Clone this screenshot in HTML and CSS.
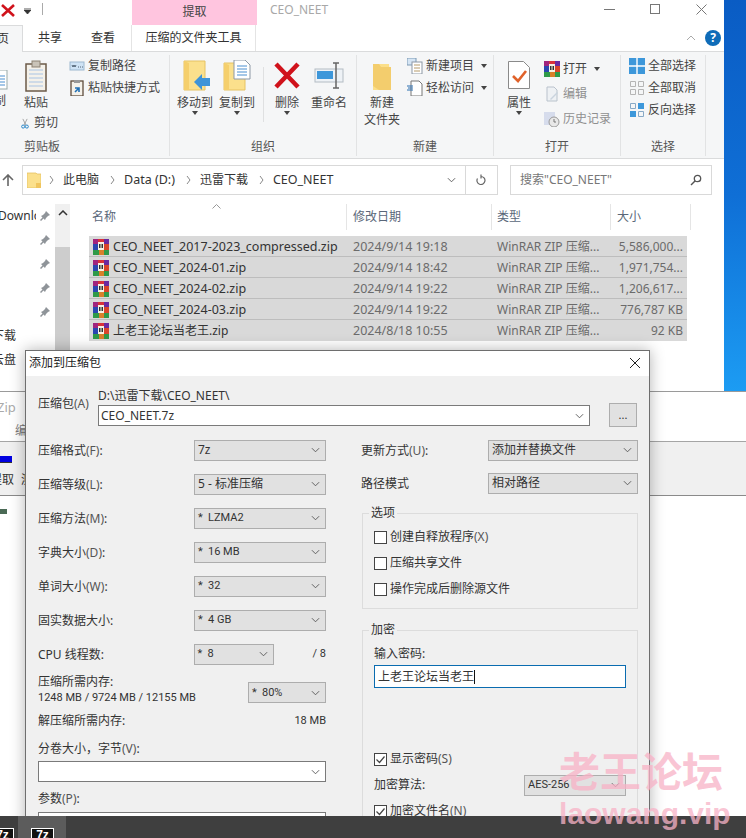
FILE: index.html
```html
<!DOCTYPE html>
<html>
<head>
  <meta charset="utf-8">
  <title>CEO_NEET</title>
  <link rel="stylesheet" href="styles.css">
</head>
<body>
  <svg class="defs" width="0" height="0">
    <symbol id="rar" viewBox="0 0 16 16">
      <rect x="0" y="0" width="16" height="5" fill="#a0247e"/>
      <rect x="5" y="0" width="6" height="5" fill="#d8323a"/>
      <rect x="11" y="0" width="5" height="5" fill="#6a2aa0"/>
      <rect x="0" y="5" width="16" height="6" fill="#2a46b0"/>
      <rect x="11" y="5" width="5" height="6" fill="#d8452a"/>
      <rect x="0" y="11" width="16" height="5" fill="#2f9a48"/>
      <rect x="6" y="11" width="5" height="5" fill="#d9802a"/>
      <rect x="5" y="3" width="6" height="8" fill="#f6f2e4"/>
      <path d="M6.500 5v4M8 5v4M9.500 5v4" stroke="#333" stroke-width="1"/>
    </symbol>
    <symbol id="chev" viewBox="0 0 10 6">
      <path d="M1 1l4 4 4-4" fill="none" stroke="#555" stroke-width="1"/>
    </symbol>
    <symbol id="pin" viewBox="0 0 12 12">
      <path d="M7 1l4 4-2 1-2 2-1 2-1.500-1.500L2 11l-1-1 2.500-2.500L2 6l2-1 2-2z" fill="#8f9499"/>
    </symbol>
    <symbol id="tick" viewBox="0 0 13 13">
      <path d="M2.500 6.500l3 3 5-6" fill="none" stroke="#444" stroke-width="1.200"/>
    </symbol>
  </svg>

  <div class="desktop"></div>

  <!-- window behind the dialog -->
  <div class="backWindow">
    <div class="backTitle"><span class="backZip">Zip</span><span class="backMenu">编</span></div>
    <div class="backTools">
      <div class="backBlue"></div>
      <div class="backLabel"><span>提取</span><span class="backNext">测</span></div>
    </div>
    <div class="backRow"><span class="backIcon"></span></div>
  </div>

  <div class="explorer">
    <div class="titleRow">
      <svg class="titleX" width="14" height="13" viewBox="0 0 14 13"><path d="M1 1l12 11M13 1L1 12" stroke="#d0121b" stroke-width="2.600"/></svg>
      <svg class="titleDrop" width="7" height="6" viewBox="0 0 7 6"><path d="M0 0h7M0 2h7l-3.500 4z" stroke="#333" stroke-width=".8" fill="#333"/></svg>
      <span class="titleSep"></span>
      <div class="contextHead">提取</div>
      <div class="titleText">CEO_NEET</div>
      <div class="winBtns">
        <svg width="11" height="11" viewBox="0 0 11 11"><path d="M0 5.500h11" stroke="#777"/></svg>
        <svg width="11" height="11" viewBox="0 0 11 11"><rect x=".5" y=".5" width="9" height="9" fill="none" stroke="#777"/></svg>
        <svg width="11" height="11" viewBox="0 0 11 11"><path d="M.5.5l10 10M10.500.5l-10 10" stroke="#777"/></svg>
      </div>
    </div>
    <div class="tabRow">
      <div class="tab tabHome"><span>主页</span></div>
      <div class="tab tabShare">共享</div>
      <div class="tab tabView">查看</div>
      <div class="tab tabContext">压缩的文件夹工具</div>
      <svg class="ribbonUp" width="10" height="6" viewBox="0 0 10 6"><path d="M1 5l4-4 4 4" fill="none" stroke="#aaa"/></svg>
      <div class="helpBtn">?</div>
    </div>

    <div class="ribbon">
      <div class="group g1">
        <div class="groupBody">
          <div class="bigCut">
            <svg width="8" height="20" viewBox="0 0 8 20"><rect x="-6" y="0" width="13" height="19" fill="#fff" stroke="#9aa"/><path d="M-3 6h8M-3 9h8M-3 12h8M-3 15h8" stroke="#4a8fd0"/></svg>
            <div class="cutLabel"><span>复制</span></div>
          </div>
          <div class="pasteCol">
            <div class="big">
              <svg class="bigIcon" width="32" height="32" viewBox="0 0 32 32"><rect x="6" y="4" width="20" height="27" fill="#f4f1ea" stroke="#6b5a48" stroke-width="1.500"/><path d="M9 10h14M9 14h14M9 18h14M9 22h14M9 26h14" stroke="#a9c4e4"/><rect x="12" y="1" width="8" height="6" fill="#c9c3b8" stroke="#8b8172"/></svg>
              <div class="bigLabel">粘贴</div>
            </div>
            <div class="small cutRow">
              <svg width="13" height="17" viewBox="0 0 13 17"><path d="M3 1l5 10M10 1L5 11" stroke="#888" stroke-width="1.200"/><circle cx="3.500" cy="13.500" r="2.500" fill="none" stroke="#1d7fc4" stroke-width="1.500"/><circle cx="9.500" cy="13.500" r="2.500" fill="none" stroke="#1d7fc4" stroke-width="1.500"/></svg>
              <span>剪切</span>
            </div>
          </div>
          <div class="smallCol clipCol">
            <div class="small">
              <svg class="smallIcon" width="16" height="16" viewBox="0 0 16 16"><rect x="1" y="4" width="14" height="8" fill="#cfe3f5" stroke="#9db8d0"/><path d="M3 7l1 2 1-2 1 2 1-2M9 9h1M11 9h1M13 9h1" stroke="#345" stroke-width=".8" fill="none"/></svg>
              <span>复制路径</span>
            </div>
            <div class="small">
              <svg class="smallIcon" width="16" height="16" viewBox="0 0 16 16"><rect x="2" y="1" width="12" height="15" fill="#f4f1ea" stroke="#5e4c3c" stroke-width="1.300"/><rect x="5" y="0" width="6" height="3" fill="#999"/><path d="M6 12V8h4M6 8l4 4" stroke="#1f6fb5" stroke-width="1.600" fill="none" transform="rotate(90 8 10)"/></svg>
              <span>粘贴快捷方式</span>
            </div>
          </div>
        </div>
        <div class="groupLabel labelLeft">剪贴板</div>
      </div>

      <div class="group g2">
        <div class="groupBody">
          <div class="big w42">
            <svg class="bigIcon" width="32" height="32" viewBox="0 0 32 32"><path d="M5 1h21v29H5z" fill="#fbe08c" stroke="#e6c263"/><path d="M5 1l5 2v27H5z" fill="#f5cf6c"/><path d="M15 22l8-8v4h8v8h-8v4z" fill="#3f94d8"/></svg>
            <div class="bigLabel">移动到</div>
            <span class="caret"></span>
          </div>
          <div class="big w42">
            <svg class="bigIcon" width="32" height="32" viewBox="0 0 32 32"><path d="M3 3h21v27H3z" fill="#fbe08c" stroke="#e6c263"/><path d="M3 3l5 2v25H3z" fill="#f5cf6c"/><path d="M13 0h11l5 5v14H13z" fill="#fff" stroke="#8d98a5"/><path d="M16 6h10M16 9h10M16 12h10M16 15h10" stroke="#4a8fd0"/></svg>
            <div class="bigLabel">复制到</div>
            <span class="caret"></span>
          </div>
          <span class="groupSep"></span>
          <div class="big w40">
            <svg class="bigIcon" width="32" height="32" viewBox="0 0 32 32"><path d="M5 4l22 23M27 4L5 27" stroke="#d0121b" stroke-width="4.500"/></svg>
            <div class="bigLabel">删除</div>
            <span class="caret"></span>
          </div>
          <div class="big w40 renameBtn">
            <svg class="bigIcon" width="32" height="32" viewBox="0 0 32 32"><rect x="2" y="9" width="28" height="13" fill="#eef2f6" stroke="#b4bcc4"/><rect x="4" y="11" width="16" height="8" fill="#3d97da"/><path d="M20 3h6M23 3v25M20 28h6" stroke="#666" stroke-width="1.500"/></svg>
            <div class="bigLabel">重命名</div>
          </div>
        </div>
        <div class="groupLabel">组织</div>
      </div>

      <div class="group g3">
        <div class="groupBody">
          <div class="big w44">
            <svg class="bigIcon" width="32" height="32" viewBox="0 0 32 32"><path d="M7 4h16l2 26H7z" fill="#fbdf8a"/><path d="M7 4h6l2 3h10l0 23H13L7 26z" fill="#f3cd6d"/></svg>
            <div class="bigLabel">新建<br>文件夹</div>
          </div>
          <div class="smallCol">
            <div class="small">
              <svg class="smallIcon" width="16" height="16" viewBox="0 0 16 16"><rect x="0" y="0" width="9" height="7" fill="#d5e5f4" stroke="#7d99b4"/><rect x="5" y="4" width="10" height="12" fill="#fff" stroke="#8d98a5"/><path d="M7 7h6M7 10h6M7 13h6" stroke="#b59a6a"/></svg>
              <span>新建项目</span><span class="caret caretInline"></span>
            </div>
            <div class="small">
              <svg class="smallIcon" width="16" height="16" viewBox="0 0 16 16"><path d="M4 1h8l3 3v12H4z" fill="#fff" stroke="#777"/><path d="M0 6h6M1 8h5M0 10h6" stroke="#2a6fb0"/></svg>
              <span>轻松访问</span><span class="caret caretInline"></span>
            </div>
          </div>
        </div>
        <div class="groupLabel">新建</div>
      </div>

      <div class="group g4">
        <div class="groupBody">
          <div class="big w40">
            <svg class="bigIcon" width="32" height="32" viewBox="0 0 32 32"><path d="M5.500 1.500h15l6 6v21h-21z" fill="#fff" stroke="#8a8a8a"/><path d="M10 16l5 5 8-10" fill="none" stroke="#e0622a" stroke-width="2.600"/></svg>
            <div class="bigLabel">属性</div>
            <span class="caret"></span>
          </div>
          <div class="smallCol openCol">
            <div class="small">
              <svg class="smallIcon" width="16" height="16"><use href="#rar"/></svg>
              <span>打开</span><span class="caret caretInline"></span>
            </div>
            <div class="small muted">
              <svg class="smallIcon" width="16" height="16" viewBox="0 0 16 16"><path d="M3 1h7l3 3v11H3z" fill="#eef1f4" stroke="#b9c2cc"/><path d="M6 13l7-7 1 1-7 7z" fill="#c9d4de"/></svg>
              <span>编辑</span>
            </div>
            <div class="small muted">
              <svg class="smallIcon" width="16" height="16" viewBox="0 0 16 16"><rect x="0" y="1" width="11" height="13" fill="#d6dcec"/><circle cx="10" cy="11" r="5" fill="#e8e8e8" stroke="#999"/><path d="M10 8v3h2" stroke="#777" fill="none"/></svg>
              <span>历史记录</span>
            </div>
          </div>
        </div>
        <div class="groupLabel">打开</div>
      </div>

      <div class="group g5">
        <div class="groupBody">
          <div class="smallCol">
            <div class="small">
              <svg class="smallIcon" width="16" height="16" viewBox="0 0 16 16"><rect width="16" height="16" fill="#3d97da"/><path d="M8 0v16M0 8h16" stroke="#fff" stroke-width="1.400"/></svg>
              <span>全部选择</span>
            </div>
            <div class="small">
              <svg class="smallIcon" width="16" height="16" viewBox="0 0 16 16"><path d="M1.500 1.500h5v5h-5zM9.500 1.500h5v5h-5zM1.500 9.500h5v5h-5zM9.500 9.500h5v5h-5z" fill="none" stroke="#b5b5b5"/></svg>
              <span>全部取消</span>
            </div>
            <div class="small">
              <svg class="smallIcon" width="16" height="16" viewBox="0 0 16 16"><rect x="9" y="1" width="6" height="6" fill="#3d97da"/><rect x="1" y="9" width="6" height="6" fill="#3d97da"/><path d="M1.500 1.500h5v5h-5zM9.500 9.500h5v5h-5z" fill="none" stroke="#88a9c6"/></svg>
              <span>反向选择</span>
            </div>
          </div>
        </div>
        <div class="groupLabel">选择</div>
      </div>
    </div>

    <div class="addressRow">
      <svg class="upArrow" width="12" height="12" viewBox="0 0 12 12"><path d="M6 12V1M1 6l5-5 5 5" fill="none" stroke="#666" stroke-width="1.600"/></svg>
      <div class="addressBar">
        <svg class="addrFolder" width="14" height="16" viewBox="0 0 14 16"><path d="M0 1h9l1 1h4v14H0z" fill="#fbe08c" stroke="#e6c263" stroke-width=".8"/><rect x="9" y="11" width="5" height="5" fill="#f0c55e"/></svg>
        <svg class="crumbSep" width="5" height="8" viewBox="0 0 5 8"><path d="M1 0l3 4-3 4" fill="none" stroke="#888"/></svg>
        <span class="crumb">此电脑</span>
        <svg class="crumbSep" width="5" height="8" viewBox="0 0 5 8"><path d="M1 0l3 4-3 4" fill="none" stroke="#888"/></svg>
        <span class="crumb crumbLatin">Data (D:)</span>
        <svg class="crumbSep" width="5" height="8" viewBox="0 0 5 8"><path d="M1 0l3 4-3 4" fill="none" stroke="#888"/></svg>
        <span class="crumb">迅雷下载</span>
        <svg class="crumbSep" width="5" height="8" viewBox="0 0 5 8"><path d="M1 0l3 4-3 4" fill="none" stroke="#888"/></svg>
        <span class="crumb crumbLatin">CEO_NEET</span>
        <svg class="addrDrop" width="9" height="6"><use href="#chev"/></svg>
        <div class="addrRefresh">
          <svg width="11" height="12" viewBox="0 0 11 12"><path d="M5 2.500a4 4 0 1 1-3.500 2M5 .5v4" fill="none" stroke="#666" stroke-width="1.200"/></svg>
        </div>
      </div>
      <div class="searchBox">
        <span>搜索"CEO_NEET"</span>
        <svg width="12" height="12" viewBox="0 0 12 12"><circle cx="7.500" cy="4.500" r="3.200" fill="none" stroke="#555" stroke-width="1.300"/><path d="M5 7l-4 4" stroke="#555" stroke-width="1.500"/></svg>
      </div>
    </div>

    <div class="mainArea">
      <div class="navPane">
        <div class="navRow"><span class="navName">Downloads</span><svg width="12" height="12"><use href="#pin"/></svg></div>
        <div class="navRow navPinOnly"><svg width="12" height="12"><use href="#pin"/></svg></div>
        <div class="navRow navPinOnly"><svg width="12" height="12"><use href="#pin"/></svg></div>
        <div class="navRow navPinOnly"><svg width="12" height="12"><use href="#pin"/></svg></div>
        <div class="navRow navPinOnly"><svg width="12" height="12"><use href="#pin"/></svg></div>
        <div class="navRow navClip"><span>下载</span></div>
        <div class="navRow navClip"><span>云盘</span></div>
      </div>
      <div class="navScroll">
        <div class="navScrollUp"><svg width="10" height="6" viewBox="0 0 10 6"><path d="M1 5l4-4 4 4" fill="none" stroke="#333" stroke-width="1.500"/></svg></div>
        <div class="navScrollThumb"></div>
      </div>
      <div class="fileList">
        <div class="listHead">
          <div class="headCell headName">名称
            <svg class="sortMark" width="9" height="5" viewBox="0 0 9 5"><path d="M.5 4.500l4-4 4 4" fill="none" stroke="#999"/></svg>
          </div>
          <div class="headCell headDate">修改日期</div>
          <div class="headCell headType">类型</div>
          <div class="headCell headSize">大小</div>
        </div>
        <div class="rows">
          <div class="fileRow"><svg width="16" height="16"><use href="#rar"/></svg><span class="fName fLatin">CEO_NEET_2017-2023_compressed.zip</span><span class="fDate">2024/9/14 19:18</span><span class="fType">WinRAR ZIP 压缩...</span><span class="fSize">5,586,000...</span></div>
          <div class="fileRow"><svg width="16" height="16"><use href="#rar"/></svg><span class="fName fLatin">CEO_NEET_2024-01.zip</span><span class="fDate">2024/9/14 18:42</span><span class="fType">WinRAR ZIP 压缩...</span><span class="fSize">1,971,754...</span></div>
          <div class="fileRow"><svg width="16" height="16"><use href="#rar"/></svg><span class="fName fLatin">CEO_NEET_2024-02.zip</span><span class="fDate">2024/9/14 19:22</span><span class="fType">WinRAR ZIP 压缩...</span><span class="fSize">1,206,617...</span></div>
          <div class="fileRow"><svg width="16" height="16"><use href="#rar"/></svg><span class="fName fLatin">CEO_NEET_2024-03.zip</span><span class="fDate">2024/9/14 19:22</span><span class="fType">WinRAR ZIP 压缩...</span><span class="fSize">776,787 KB</span></div>
          <div class="fileRow"><svg width="16" height="16"><use href="#rar"/></svg><span class="fName">上老王论坛当老王.zip</span><span class="fDate">2024/8/18 10:55</span><span class="fType">WinRAR ZIP 压缩...</span><span class="fSize">92 KB</span></div>
        </div>
      </div>
    </div>
  </div>

  <div class="dialog">
    <div class="dlgTitle">
      <span>添加到压缩包</span>
      <svg width="12" height="12" viewBox="0 0 12 12"><path d="M1 1l10 10M11 1L1 11" stroke="#222" stroke-width="1"/></svg>
    </div>
    <div class="dlgBody">
      <div class="archiveRow">
        <div class="archiveLabel">压缩包<span class="key">(A)</span></div>
        <div class="archivePath">
          <div class="pathText">D:\迅雷下载\CEO_NEET\</div>
          <div class="combo wideCombo"><span>CEO_NEET.7z</span><svg width="9" height="6"><use href="#chev"/></svg></div>
        </div>
        <div class="browseBtn">...</div>
      </div>

      <div class="columns">
        <div class="colLeft">
          <div class="field"><span>压缩格式<span class="key">(F)</span>:</span><div class="select sel132"><span>7z</span><svg width="9" height="6"><use href="#chev"/></svg></div></div>
          <div class="field"><span>压缩等级<span class="key">(L)</span>:</span><div class="select sel132"><span>5 - 标准压缩</span><svg width="9" height="6"><use href="#chev"/></svg></div></div>
          <div class="field"><span>压缩方法<span class="key">(M)</span>:</span><div class="select sel132"><span class="narrow"><i class="star">*</i>LZMA2</span><svg width="9" height="6"><use href="#chev"/></svg></div></div>
          <div class="field"><span>字典大小<span class="key">(D)</span>:</span><div class="select sel132"><span class="narrow"><i class="star">*</i>16 MB</span><svg width="9" height="6"><use href="#chev"/></svg></div></div>
          <div class="field"><span>单词大小<span class="key">(W)</span>:</span><div class="select sel132"><span class="narrow"><i class="star">*</i>32</span><svg width="9" height="6"><use href="#chev"/></svg></div></div>
          <div class="field"><span>固实数据大小:</span><div class="select sel132"><span class="narrow"><i class="star">*</i>4 GB</span><svg width="9" height="6"><use href="#chev"/></svg></div></div>
          <div class="field fieldCpu">
            <span class="cpuName">CPU 线程数:</span>
            <div class="select sel80"><span class="narrow"><i class="star">*</i>8</span><svg width="9" height="6"><use href="#chev"/></svg></div>
            <span class="cpuMax narrow">/ 8</span>
          </div>
          <div class="memRow">
            <div class="memText">压缩所需内存:<br><span class="narrow">1248 MB / 9724 MB / 12155 MB</span></div>
            <div class="select sel78"><span class="narrow"><i class="star">*</i>80%</span><svg width="9" height="6"><use href="#chev"/></svg></div>
          </div>
          <div class="unpackRow"><span>解压缩所需内存:</span><span class="narrow">18 MB</span></div>
          <div class="splitLabel">分卷大小，字节<span class="key">(V)</span>:</div>
          <div class="combo"><span></span><svg width="9" height="6"><use href="#chev"/></svg></div>
          <div class="paramLabel">参数<span class="key">(P)</span>:</div>
          <div class="combo paramInput"></div>
        </div>

        <div class="colRight">
          <div class="field"><span>更新方式<span class="key">(U)</span>:</span><div class="select sel150"><span>添加并替换文件</span><svg width="9" height="6"><use href="#chev"/></svg></div></div>
          <div class="field fieldPath"><span>路径模式</span><div class="select sel150"><span>相对路径</span><svg width="9" height="6"><use href="#chev"/></svg></div></div>

          <fieldset class="optBox">
            <legend>选项</legend>
            <div class="check"><span class="box"></span><span>创建自释放程序<span class="key">(X)</span></span></div>
            <div class="check"><span class="box"></span><span>压缩共享文件</span></div>
            <div class="check"><span class="box"></span><span>操作完成后删除源文件</span></div>
          </fieldset>

          <fieldset class="encBox">
            <legend>加密</legend>
            <div class="pwLabel">输入密码:</div>
            <div class="pwInput">上老王论坛当老王<span class="textCaret"></span></div>
            <div class="check showPw"><span class="box"><svg width="13" height="13"><use href="#tick"/></svg></span><span>显示密码<span class="key">(S)</span></span></div>
            <div class="algoRow"><span>加密算法:</span><div class="select sel102"><span class="narrow">AES-256</span><svg width="9" height="6"><use href="#chev"/></svg></div></div>
            <div class="check"><span class="box"><svg width="13" height="13"><use href="#tick"/></svg></span><span>加密文件名<span class="key">(N)</span></span></div>
          </fieldset>
        </div>
      </div>
    </div>
  </div>

  <div class="taskbar">
    <div class="taskItem taskCut"><span class="sevenZ">7z</span></div>
    <div class="taskItem taskActive"><span class="sevenZ">7z</span></div>
  </div>

  <div class="watermark">
    <div class="wmCn">老王论坛</div>
    <div class="wmEn">laowang.vip</div>
  </div>
</body>
</html>
```

FILE: styles.css
```css
* {
  box-sizing: border-box;
}
html, body {
  margin: 0;
  padding: 0;
}
body {
  position: relative;
  width: 746px;
  height: 838px;
  overflow: hidden;
  background-color: #fff;
  color: #333;
  font-family: "Noto Sans", "Noto Sans CJK SC", sans-serif;
  font-size: 12px;
  line-height: 16px;
}
.defs {
  position: absolute;
}

/* desktop and the window behind */
.desktop {
  position: absolute;
  left: 724px;
  top: 0;
  width: 22px;
  height: 392px;
  background: linear-gradient(#0a5cc4, #0f6fd6 50%, #1c9cf3);
}
.backWindow {
  position: absolute;
  left: 0;
  top: 391px;
  width: 746px;
  height: 425px;
  background-color: #fff;
  border-top: 1px solid #9a9a9a;
}
.backTitle {
  height: 50px;
  border-bottom: 1px solid #a5a5a5;
  color: #aaa;
}
.backZip {
  display: block;
  padding-top: 7px;
  height: 31px;
  font-size: 13px;
  margin-left: -3px;
}
.backMenu {
  display: block;
  margin-left: 15px;
  color: #777;
}
.backTools {
  height: 54px;
  padding-top: 14px;
  background-color: #f0f0f0;
  border-bottom: 1px solid #8a8a8a;
}
.backBlue {
  width: 12px;
  height: 7px;
  background-color: #0000e0;
  border-bottom: 1px solid #333;
}
.backLabel {
  display: flex;
  margin: 9px 0 0 -10px;
  color: #333;
}
.backNext {
  margin-left: 7px;
}
.backRow {
  padding-top: 13px;
}
.backIcon {
  display: block;
  width: 7px;
  height: 5px;
  background-color: #4a6a55;
}

/* explorer window */
.explorer {
  position: absolute;
  left: 0;
  top: 0;
  width: 724px;
  height: 391px;
  background-color: #fff;
  overflow: hidden;
}
.titleRow {
  display: flex;
  align-items: center;
  height: 25px;
}
.titleX {
  margin-left: 1px;
  margin-top: -4px;
}
.titleDrop {
  margin-left: 9px;
  margin-top: -3px;
}
.titleSep {
  width: 1px;
  height: 12px;
  margin-left: 11px;
  margin-top: -7px;
  background-color: #aaa;
}
.contextHead {
  width: 125px;
  height: 25px;
  margin-left: 89px;
  background-color: #ffc5df;
  text-align: center;
  line-height: 24px;
  color: #444;
}
.titleText {
  margin-left: 13px;
  margin-top: -5px;
  color: #a8a8a8;
}
.winBtns {
  display: flex;
  gap: 35px;
  margin-left: auto;
  margin-right: 17px;
  margin-top: -6px;
}
.tabRow {
  display: flex;
  align-items: center;
  height: 27px;
  border-bottom: 1px solid #dadbdc;
}
.tab {
  height: 26px;
  line-height: 25px;
  color: #333;
}
.tabHome {
  display: flex;
  justify-content: flex-end;
  width: 23px;
  height: 27px;
  overflow: hidden;
  background-color: #f5f6f7;
  border-right: 1px solid #dadbdc;
  border-top: 1px solid #dadbdc;
  padding-right: 13px;
  flex-shrink: 0;
}
.tabHome span {
  flex-shrink: 0;
}
.tabShare {
  margin-left: 15px;
}
.tabView {
  margin-left: 29px;
}
.tabContext {
  width: 125px;
  margin-left: 16px;
  text-align: center;
  border-left: 1px solid #e4e4e4;
  border-right: 1px solid #e4e4e4;
}
.ribbonUp {
  margin-left: 430px;
}
.helpBtn {
  width: 16px;
  height: 16px;
  margin-left: 9px;
  border-radius: 50%;
  background-color: #0f6cb8;
  color: #fff;
  text-align: center;
  font-weight: bold;
  font-size: 12px;
  line-height: 16px;
}

/* ribbon */
.ribbon {
  display: flex;
  height: 107px;
  padding-top: 3px;
  background-color: #f5f6f7;
  border-bottom: 1px solid #dadbdc;
}
.group {
  display: flex;
  flex-direction: column;
  height: 101px;
  border-right: 1px solid #e2e3e4;
}
.g1 { width: 170px; }
.g2 { width: 187px; padding-left: 4px; }
.g3 { width: 137px; padding-left: 3px; }
.g4 { width: 127px; padding-left: 5px; }
.g5 { width: 85px; padding-left: 8px; }
.groupBody {
  display: flex;
  height: 84px;
}
.groupLabel {
  height: 16px;
  text-align: center;
  color: #555;
}
.g2 .groupLabel { margin-left: -4px; }
.g3 .groupLabel { margin-left: -3px; }
.g4 .groupLabel { margin-left: -5px; }
.g5 .groupLabel { margin-left: -8px; }
.labelLeft {
  text-align: left;
  padding-left: 24px;
}
.groupSep {
  width: 1px;
  height: 55px;
  margin: 12px 3px 0 5px;
  background-color: #dfe0e1;
}
.big {
  display: flex;
  flex-direction: column;
  align-items: center;
  padding-top: 5px;
  flex-shrink: 0;
}
.w42 { width: 42px; }
.w40 { width: 40px; }
.w44 { width: 44px; }
.renameBtn { margin-left: 2px; }
.bigIcon {
  display: block;
  margin-bottom: 2px;
}
.bigLabel {
  text-align: center;
  line-height: 17px;
  color: #444;
}
.caret {
  display: block;
  width: 0;
  height: 0;
  border-left: 3.5px solid transparent;
  border-right: 3.5px solid transparent;
  border-top: 4px solid #444;
}
.caretInline {
  margin-left: 7px;
}
.bigCut {
  width: 8px;
  padding-top: 15px;
  overflow: hidden;
  flex-shrink: 0;
}
.bigCut svg {
  display: block;
}
.cutLabel {
  display: flex;
  justify-content: flex-end;
  width: 6px;
  margin-top: 3px;
  overflow: hidden;
  color: #444;
}
.cutLabel span {
  flex-shrink: 0;
}
.pasteCol {
  width: 44px;
  margin-left: 6px;
  flex-shrink: 0;
}
.cutRow {
  margin-left: 7px;
  margin-top: 1px;
  gap: 5px;
  white-space: nowrap;
}
.smallCol {
  display: flex;
  flex-direction: column;
  margin-left: 3px;
}
.g5 .smallCol {
  margin-left: 0;
}
.clipCol {
  margin-left: 11px;
}
.openCol {
  margin-left: 5px;
  padding-top: 3px;
  gap: 3px;
}
.small {
  display: flex;
  align-items: center;
  height: 22px;
  color: #444;
  white-space: nowrap;
}
.smallIcon {
  margin-right: 3px;
  flex-shrink: 0;
}
.muted {
  color: #8f8f8f;
}

/* address bar */
.addressRow {
  display: flex;
  height: 45px;
  padding: 6px 0 9px;
}
.upArrow {
  margin: 9px 8px 0 2px;
}
.addressBar {
  display: flex;
  align-items: center;
  width: 476px;
  height: 30px;
  padding-left: 4px;
  border: 1px solid #d9d9d9;
}
.addrFolder {
  margin-right: 8px;
}
.crumbSep {
  flex-shrink: 0;
}
.crumb {
  margin: 0 11px 0 9px;
  white-space: nowrap;
}
.crumbLatin {
  font-size: 12.5px;
}
.addrDrop {
  margin-left: auto;
  margin-right: 9px;
}
.addrRefresh {
  display: flex;
  align-items: center;
  justify-content: center;
  width: 32px;
  height: 28px;
  border-left: 1px solid #d9d9d9;
}
.searchBox {
  display: flex;
  align-items: center;
  justify-content: space-between;
  width: 202px;
  height: 30px;
  margin-left: 12px;
  padding: 0 9px;
  border: 1px solid #d9d9d9;
  color: #777;
}

/* navigation pane and file list */
.mainArea {
  display: flex;
  height: 187px;
}
.navPane {
  width: 55px;
  overflow: hidden;
  flex-shrink: 0;
}
.navRow {
  display: flex;
  align-items: center;
  height: 24px;
  white-space: nowrap;
}
.navName {
  width: 38px;
  margin-left: -2px;
  overflow: hidden;
  margin-right: 3px;
}
.navRow svg {
  flex-shrink: 0;
}
.navPinOnly {
  padding-left: 39px;
}
.navClip {
  justify-content: flex-end;
  width: 16px;
  overflow: hidden;
}
.navClip span {
  flex-shrink: 0;
}
.navScroll {
  width: 15px;
  background-color: #f0f0f0;
  flex-shrink: 0;
}
.navScrollUp {
  display: flex;
  justify-content: center;
  align-items: center;
  height: 17px;
}
.navScrollThumb {
  height: 170px;
  margin-top: 26px;
  background-color: #cdcdcd;
}
.fileList {
  flex: 1;
}
.listHead {
  display: flex;
  height: 26px;
}
.headCell {
  height: 26px;
  line-height: 25px;
  color: #5a6779;
  border-right: 1px solid #e5e5e5;
}
.headName {
  position: relative;
  width: 277px;
  padding-left: 22px;
}
.sortMark {
  position: absolute;
  left: 142px;
  top: 0;
}
.headDate {
  width: 145px;
  padding-left: 6px;
}
.headType {
  width: 119px;
  padding-left: 5px;
}
.headSize {
  width: 80px;
  padding-left: 6px;
}
.rows {
  width: 598px;
  margin: 6px 0 0 19px;
}
.fileRow {
  display: flex;
  align-items: center;
  height: 21px;
  padding: 1px 0 0 4px;
  background-color: #d9d9d9;
  border-bottom: 1px solid #bdbdbd;
  white-space: nowrap;
  color: #6b6b6b;
}
.fileRow:last-child {
  padding-top: 0;
  border-bottom: 0;
}
.fName {
  width: 240px;
  margin-left: 4px;
  color: #333;
}
.fLatin {
  font-size: 12.5px;
}
.fDate {
  width: 144px;
  font-size: 12.5px;
}
.fType {
  width: 120px;
}
.fSize {
  width: 66px;
  text-align: right;
}

/* the add-to-archive dialog */
.dialog {
  position: absolute;
  left: 25px;
  top: 350px;
  width: 625px;
  height: 488px;
  background-color: #f0f0f0;
  border: 1px solid #6e6e6e;
  box-shadow: 0 0 14px rgba(0, 0, 0, .3);
  overflow: hidden;
}
.dlgTitle {
  display: flex;
  align-items: center;
  justify-content: space-between;
  height: 25px;
  padding: 0 8px 2px 3px;
  background-color: #fff;
  color: #222;
}
.dlgBody {
  padding: 0 12px;
}
.key {
  color: #555;
}
.narrow {
  font-family: Roboto, "Noto Sans CJK SC", sans-serif;
  font-size: 11px;
}
.archiveRow {
  display: flex;
  height: 57px;
}
.archiveLabel {
  width: 60px;
  margin-top: 20px;
}
.archivePath {
  width: 492px;
  padding-top: 13px;
}
.pathText {
  height: 16px;
  line-height: 14px;
}
.combo {
  display: flex;
  align-items: center;
  justify-content: space-between;
  height: 21px;
  padding: 0 5px 0 2px;
  background-color: #fff;
  border: 1px solid #7a7a7a;
}
.browseBtn {
  width: 28px;
  height: 24px;
  margin: 27px 0 0 19px;
  background-color: #e1e1e1;
  border: 1px solid #adadad;
  text-align: center;
  line-height: 21px;
  font-size: 11px;
}
.columns {
  display: flex;
  gap: 35px;
}
.colLeft {
  width: 288px;
  flex-shrink: 0;
}
.colRight {
  width: 277px;
  flex-shrink: 0;
}
.field {
  display: flex;
  align-items: center;
  justify-content: space-between;
  height: 34px;
}
.field > span:first-child {
  margin-top: 2px;
}
.fieldPath {
  height: 32px;
}
.fieldCpu {
  justify-content: flex-start;
}
.cpuName {
  width: 156px;
}
.cpuMax {
  flex-shrink: 0;
  margin-left: 39px;
  white-space: nowrap;
}
.select {
  display: flex;
  align-items: center;
  justify-content: space-between;
  height: 21px;
  padding: 0 5px 0 3px;
  background-color: #e1e1e1;
  border: 1px solid #adadad;
  flex-shrink: 0;
  white-space: nowrap;
}
.sel132 { width: 132px; }
.sel80 { width: 80px; }
.sel78 { width: 78px; }
.sel150 { width: 150px; }
.sel102 { width: 102px; }
.star {
  display: inline-block;
  width: 10px;
  font-style: normal;
}
.memRow {
  display: flex;
  align-items: flex-start;
  justify-content: space-between;
  margin-top: 3px;
  height: 31px;
}
.memText {
  line-height: 15px;
  white-space: nowrap;
}
.memRow .select {
  margin-top: 8px;
}
.unpackRow {
  display: flex;
  justify-content: space-between;
  margin-top: 8px;
}
.splitLabel {
  margin-top: 12px;
  height: 20px;
}
.paramLabel {
  margin-top: 9px;
  height: 21px;
}
.paramInput {
  height: 24px;
}
fieldset {
  width: 276px;
  margin: 0 0 0 1px;
  min-width: 0;
  padding: 0 11px;
  border: 1px solid #dcdcdc;
}
legend {
  margin-left: -5px;
  padding: 0 2px;
  line-height: 16px;
}
.optBox {
  height: 104px;
  margin-top: 6px;
  padding-top: 3px;
}
.encBox {
  margin-top: 13px;
  padding-top: 8px;
}
.check {
  display: flex;
  align-items: center;
  gap: 3px;
  height: 26px;
}
.box {
  display: block;
  width: 13px;
  height: 13px;
  background-color: #fff;
  border: 1px solid #444;
  flex-shrink: 0;
}
.box svg {
  display: block;
  margin: -1px;
}
.pwInput {
  display: flex;
  align-items: center;
  height: 23px;
  margin-top: 3px;
  padding-left: 3px;
  background-color: #fff;
  border: 1px solid #0a6cb0;
}
.textCaret {
  width: 1px;
  height: 14px;
  background-color: #111;
}
.showPw {
  margin-top: 58px;
}
.algoRow {
  display: flex;
  align-items: center;
  justify-content: space-between;
  height: 26px;
}

/* taskbar */
.taskbar {
  position: absolute;
  left: 0;
  top: 816px;
  display: flex;
  width: 746px;
  height: 22px;
  background-color: #3f3f3f;
}
.taskItem {
  height: 22px;
  overflow: hidden;
}
.taskCut {
  width: 27px;
  margin-left: -9px;
}
.taskActive {
  width: 48px;
  padding-left: 13px;
  background-color: #5c5c5c;
}
.sevenZ {
  display: block;
  width: 23px;
  height: 24px;
  margin-top: 12px;
  background-color: #111;
  border: 1px solid #fff;
  color: #fff;
  font-family: "Liberation Sans", sans-serif;
  font-weight: bold;
  font-size: 12px;
  line-height: 12px;
  text-align: center;
}

/* forum watermark */
.watermark {
  position: absolute;
  left: 559px;
  top: 744px;
  width: 175px;
  color: rgba(248, 178, 198, .75);
  font-weight: bold;
  white-space: nowrap;
}
.wmCn {
  font-size: 41px;
  line-height: 50px;
  font-family: "Noto Sans CJK SC", sans-serif;
}
.wmEn {
  font-size: 30px;
  line-height: 40px;
  font-family: "Liberation Sans", sans-serif;
}
```
